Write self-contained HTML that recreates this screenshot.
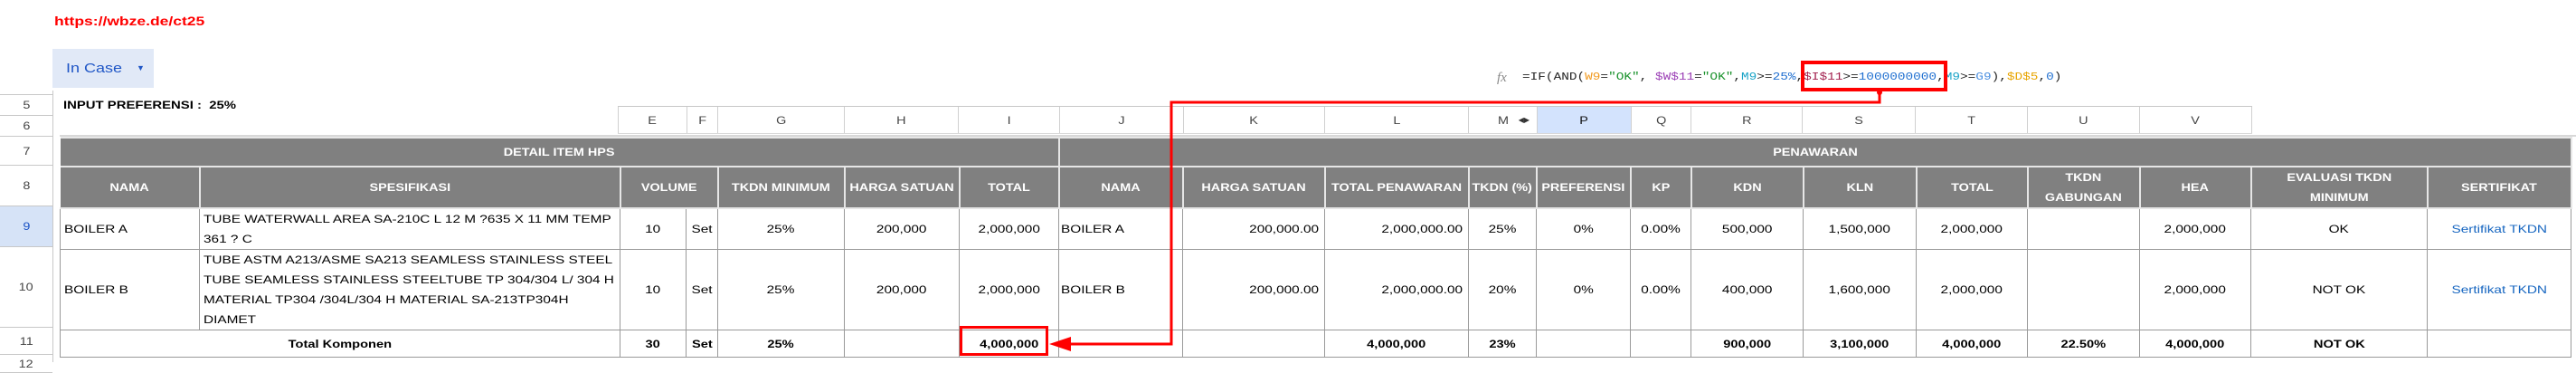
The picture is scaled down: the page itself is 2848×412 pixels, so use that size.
<!DOCTYPE html>
<html><head><meta charset="utf-8"><style>
*{margin:0;padding:0;box-sizing:border-box}
body{width:2848px;height:400px;position:relative;overflow:hidden;background:#fff;font-family:"Liberation Sans",Arial,sans-serif;}
.a{position:absolute}
.s{display:inline-block;transform:scaleX(1.2);transform-origin:center;white-space:nowrap}
.sl{display:inline-block;transform:scaleX(1.2);transform-origin:left;white-space:nowrap}
.sr{display:inline-block;transform:scaleX(1.2);transform-origin:right;white-space:nowrap}
tr.d .s,tr.d .sl,tr.d .sr{transform:scaleX(1.28)}
tr.b .s{transform:scaleX(1.22)}
.rh{position:absolute;left:0;width:58px;border-bottom:1px solid #c8c8c8;font-size:12px;color:#444;text-align:center;display:flex;align-items:center;justify-content:center}
.ch{position:absolute;top:118px;height:29px;border-right:1px solid #d0d0d0;font-size:12px;color:#444;display:flex;align-items:center;justify-content:center}
table{position:absolute;left:66px;top:151px;border-collapse:collapse;table-layout:fixed;width:2776px;font-size:12px}
td{border:1px solid #9a9a9a;padding:0 6px;overflow:hidden;text-align:center;color:#000}
tr.h td{background:#808080;color:#fff;font-weight:bold;border:2px solid #e6e6e6;line-height:22px}
tr.h td:first-child{border-left:none}
.b td{font-weight:bold}
.l{text-align:left}.r{text-align:right}
.lnk{color:#1565c0}
.f{font-family:"Liberation Mono",monospace;font-size:12px}
</style></head><body>
<div class="a" style="left:60px;top:15px;font-size:14px;font-weight:bold;color:#ff0000"><span class="sl" style="transform:scaleX(1.25)">https://wbze.de/ct25</span></div>
<div class="a" style="left:58px;top:54px;width:112px;height:43px;background:#e1e9f7;color:#1f56c6;font-size:15px;line-height:43px;padding-left:15px"><span class="sl">In Case</span><span style="position:absolute;left:93px;top:0;font-size:9px">▼</span></div>
<div class="a" style="left:1655px;top:78px;font-family:'Liberation Serif',serif;font-style:italic;font-size:15px;color:#888">fx</div>
<div class="a f" style="left:1683px;top:78px;color:#222"><span class="sl">=IF(AND(<span style="color:#f29a1f">W9</span>=<span style="color:#18912a">"OK"</span>, <span style="color:#9b3fb5">$W$11</span>=<span style="color:#18912a">"OK"</span>,<span style="color:#1aa3c7">M9</span>&gt;=<span style="color:#1f6fd0">25%</span>,<span style="color:#a3214f">$I$11</span>&gt;=<span style="color:#1f6fd0">1000000000</span>,<span style="color:#1aa3c7">M9</span>&gt;=<span style="color:#4a8fe0">G9</span>),<span style="color:#e8a400">$D$5</span>,<span style="color:#1f6fd0">0</span>)</span></div>
<div class="a" style="left:1991px;top:67px;width:162px;height:34px;border:4px solid #f00"></div>
<!-- row headers -->
<div class="a" style="left:58px;top:100px;width:1px;height:300px;background:#c8c8c8"></div>
<div class="a" style="left:0;top:104px;width:58px;height:1px;background:#c8c8c8"></div>
<div class="rh" style="top:105px;height:23px"><span class="s">5</span></div>
<div class="rh" style="top:128px;height:23px"><span class="s">6</span></div>
<div class="rh" style="top:151px;height:32px"><span class="s">7</span></div>
<div class="rh" style="top:183px;height:45px"><span class="s">8</span></div>
<div class="rh" style="top:228px;height:45px;background:#d6e3f7;color:#1f56c6"><span class="s">9</span></div>
<div class="rh" style="top:273px;height:89px"><span class="s">10</span></div>
<div class="rh" style="top:362px;height:30px"><span class="s">11</span></div>
<div class="rh" style="top:392px;height:20px"><span class="s">12</span></div>
<div class="a" style="left:70px;top:109px;font-size:12px;font-weight:bold"><span class="sl" style="transform:scaleX(1.24)">INPUT PREFERENSI :&nbsp; 25%</span></div>
<!-- column headers -->
<div class="a" style="left:683px;top:117px;width:1807px;height:1px;background:#c8c8c8"></div>
<div class="a" style="left:683px;top:147px;width:1807px;height:1px;background:#d8d8d8"></div>
<div class="a" style="left:66px;top:149px;width:2782px;height:2px;background:#d8d8d8"></div>
<div class="ch" style="left:683px;width:77px;border-left:1px solid #d0d0d0"><span class="s">E</span></div>
<div class="ch" style="left:760px;width:34px"><span class="s">F</span></div>
<div class="ch" style="left:794px;width:140px"><span class="s">G</span></div>
<div class="ch" style="left:934px;width:126px"><span class="s">H</span></div>
<div class="ch" style="left:1060px;width:112px"><span class="s">I</span></div>
<div class="ch" style="left:1172px;width:137px"><span class="s">J</span></div>
<div class="ch" style="left:1309px;width:156px"><span class="s">K</span></div>
<div class="ch" style="left:1465px;width:159px"><span class="s">L</span></div>
<div class="ch" style="left:1624px;width:76px"><span class="s">M</span><span style="position:absolute;right:8px;font-size:8px;color:#333">◀▶</span></div>
<div class="ch" style="left:1700px;width:104px;background:#d3e3fd;color:#111"><span class="s">P</span></div>
<div class="ch" style="left:1804px;width:66px"><span class="s">Q</span></div>
<div class="ch" style="left:1870px;width:123px"><span class="s">R</span></div>
<div class="ch" style="left:1993px;width:125px"><span class="s">S</span></div>
<div class="ch" style="left:2118px;width:124px"><span class="s">T</span></div>
<div class="ch" style="left:2242px;width:124px"><span class="s">U</span></div>
<div class="ch" style="left:2366px;width:124px"><span class="s">V</span></div>
<table>
<colgroup><col style="width:154px"><col style="width:465px"><col style="width:73px"><col style="width:35px"><col style="width:140px"><col style="width:127px"><col style="width:110px"><col style="width:137px"><col style="width:157px"><col style="width:159px"><col style="width:75px"><col style="width:104px"><col style="width:67px"><col style="width:124px"><col style="width:125px"><col style="width:123px"><col style="width:124px"><col style="width:123px"><col style="width:195px"><col style="width:159px"></colgroup>
<tr class="h" style="height:32px"><td colspan="7"><span class="s">DETAIL ITEM HPS</span></td><td colspan="13"><span class="s">PENAWARAN</span></td></tr>
<tr class="h" style="height:45px"><td><span class="s">NAMA</span></td><td><span class="s">SPESIFIKASI</span></td><td colspan="2"><span class="s">VOLUME</span></td><td><span class="s">TKDN MINIMUM</span></td><td><span class="s">HARGA SATUAN</span></td><td><span class="s">TOTAL</span></td><td><span class="s">NAMA</span></td><td><span class="s">HARGA SATUAN</span></td><td style="padding:0"><span class="s">TOTAL PENAWARAN</span></td><td style="padding:0"><span class="s">TKDN (%)</span></td><td><span class="s">PREFERENSI</span></td><td><span class="s">KP</span></td><td><span class="s">KDN</span></td><td><span class="s">KLN</span></td><td><span class="s">TOTAL</span></td><td><span class="s">TKDN<br>GABUNGAN</span></td><td><span class="s">HEA</span></td><td><span class="s">EVALUASI TKDN<br>MINIMUM</span></td><td><span class="s">SERTIFIKAT</span></td></tr>
<tr class="d" style="height:45px;line-height:22px"><td class="l" style="padding-left:4px"><span class="sl">BOILER A</span></td><td class="l" style="padding-left:4px"><span class="sl">TUBE WATERWALL AREA SA-210C L 12 M ?635 X 11 MM TEMP<br>361 ? C</span></td><td><span class="s">10</span></td><td style="padding:0"><span class="s">Set</span></td><td><span class="s">25%</span></td><td><span class="s">200,000</span></td><td><span class="s">2,000,000</span></td><td class="l" style="padding-left:2px"><span class="sl">BOILER A</span></td><td class="r"><span class="sr">200,000.00</span></td><td class="r"><span class="sr">2,000,000.00</span></td><td><span class="s">25%</span></td><td><span class="s">0%</span></td><td style="padding:0"><span class="s">0.00%</span></td><td><span class="s">500,000</span></td><td><span class="s">1,500,000</span></td><td><span class="s">2,000,000</span></td><td></td><td><span class="s">2,000,000</span></td><td><span class="s">OK</span></td><td class="lnk"><span class="s">Sertifikat TKDN</span></td></tr>
<tr class="d" style="height:89px;line-height:22px"><td class="l" style="padding-left:4px"><span class="sl">BOILER B</span></td><td class="l" style="padding-left:4px"><span class="sl">TUBE ASTM A213/ASME SA213 SEAMLESS STAINLESS STEEL<br>TUBE SEAMLESS STAINLESS STEELTUBE TP 304/304 L/ 304 H<br>MATERIAL TP304 /304L/304 H MATERIAL SA-213TP304H<br>DIAMET</span></td><td><span class="s">10</span></td><td style="padding:0"><span class="s">Set</span></td><td><span class="s">25%</span></td><td><span class="s">200,000</span></td><td><span class="s">2,000,000</span></td><td class="l" style="padding-left:2px"><span class="sl">BOILER B</span></td><td class="r"><span class="sr">200,000.00</span></td><td class="r"><span class="sr">2,000,000.00</span></td><td><span class="s">20%</span></td><td><span class="s">0%</span></td><td style="padding:0"><span class="s">0.00%</span></td><td><span class="s">400,000</span></td><td><span class="s">1,600,000</span></td><td><span class="s">2,000,000</span></td><td></td><td><span class="s">2,000,000</span></td><td><span class="s">NOT OK</span></td><td class="lnk"><span class="s">Sertifikat TKDN</span></td></tr>
<tr class="b" style="height:30px"><td colspan="2"><span class="s">Total Komponen</span></td><td><span class="s">30</span></td><td style="padding:0"><span class="s">Set</span></td><td><span class="s">25%</span></td><td></td><td><span class="s">4,000,000</span></td><td></td><td></td><td><span class="s">4,000,000</span></td><td><span class="s">23%</span></td><td></td><td></td><td><span class="s">900,000</span></td><td><span class="s">3,100,000</span></td><td><span class="s">4,000,000</span></td><td><span class="s">22.50%</span></td><td><span class="s">4,000,000</span></td><td><span class="s">NOT OK</span></td><td></td></tr>
</table>
<div class="a" style="left:1061px;top:360px;width:98px;height:33px;border:3px solid #f00"></div>
<svg class="a" style="left:0;top:0" width="2848" height="400">
<circle cx="2078" cy="102" r="3" fill="#f00"/>
<polyline points="2078,101 2078,113 1295,113 1295,380 1180,380" fill="none" stroke="#f00" stroke-width="3"/>
<polygon points="1160,380 1184,372 1184,388" fill="#f00"/>
</svg>
</body></html>
